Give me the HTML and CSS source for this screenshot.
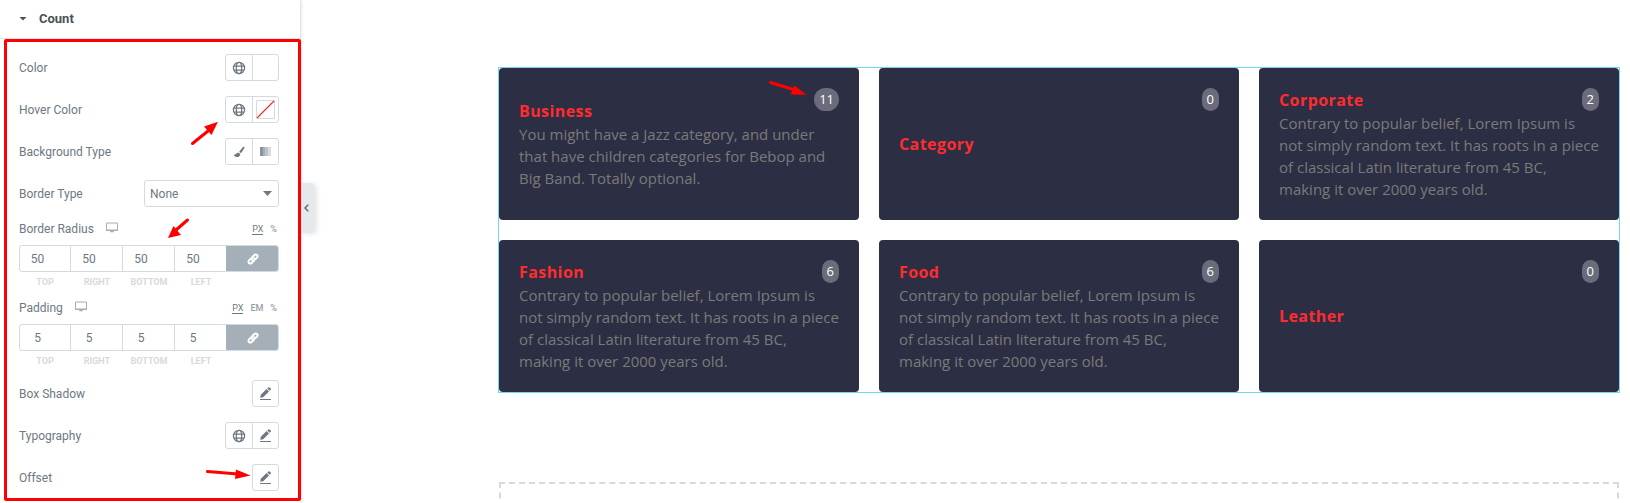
FILE: index.html
```html
<!DOCTYPE html>
<html lang="en">
<head>
<meta charset="utf-8">
<title>Count settings</title>
<link rel="stylesheet" href="styles.css">
</head>
<body>
<svg class="defs" width="0" height="0" aria-hidden="true">
  <symbol id="globe" viewBox="0 0 14 14"><g fill="none" stroke="currentColor" stroke-width="1.25"><circle cx="7" cy="7" r="5.600"/><ellipse cx="7" cy="7" rx="2.700" ry="5.600"/><path d="M2 5H12M2 9H12"/></g></symbol>
  <symbol id="pencil" viewBox="0 0 14 14"><path fill="currentColor" d="M1 12H12V13H1ZM1.200 10.800L1.800 7.800L7.600 2.100L10 4.500L4.200 10.200ZM8.300 1.400L9.300.4Q9.900 0 10.500.4L11.700 1.600Q12.300 2.200 11.700 2.800L10.700 3.800Z"/></symbol>
  <symbol id="brush" viewBox="0 0 12 12"><path fill="currentColor" d="M11.200.8C11.600 1.200 11.500 1.800 11.300 2.200L8 7.200L6.200 5.700L10 1.100C10.400.7 10.900.5 11.200.8ZM5.500 6.400L7.300 7.900C7.300 10 5.800 11 4 11C2 11 .9 10.300.8 8.600C2.800 9.500 2.800 6.600 5.500 6.400Z"/></symbol>
  <symbol id="desktop" viewBox="0 0 12 11"><path fill="none" stroke="currentColor" d="M.5 1H11.500V8.500H.5Z"/><path fill="currentColor" d="M0 7.500H12V9H0ZM4 9H8L7.500 10.300H4.500Z"/></symbol>
  <symbol id="link" viewBox="0 0 12 12"><g fill="none" stroke="currentColor" stroke-width="2" stroke-linecap="round"><path d="M5.100 6.900C4.300 6.100 4.400 5 5.100 4.300L7.400 2C8.200 1.200 9.300 1.300 10 2C10.700 2.700 10.800 3.800 10 4.600L8.800 5.800"/><path d="M6.900 5.100C7.700 5.900 7.600 7 6.900 7.700L4.600 10C3.800 10.800 2.700 10.700 2 10C1.300 9.300 1.200 8.200 2 7.400L3.200 6.200"/></g></symbol>
</svg>
<div class="editor">
  <aside class="panel">
    <header class="section-head"><i class="caret"></i><span>Count</span></header>
    <div class="controls">
      <div class="row"><span>Color</span><div class="group"><b><svg class="i14"><use href="#globe"/></svg></b><b></b></div></div>
      <div class="row"><span>Hover Color</span><div class="group"><b><svg class="i14"><use href="#globe"/></svg></b><b><svg class="swatch" viewBox="0 0 19 19"><path d="M.5.5H18.500V18.500H.5Z" fill="none" stroke="#d5dadf"/><path d="M1 18L18 1" stroke="#f22" stroke-width="1.1"/></svg></b></div></div>
      <div class="row"><span>Background Type</span><div class="group"><b><svg class="i12"><use href="#brush"/></svg></b><b><i class="gradient"></i></b></div></div>
      <div class="row"><span>Border Type</span><div class="select"><span>None</span><i class="caret"></i></div></div>
      <div class="dim-head"><span>Border Radius</span><svg class="device"><use href="#desktop"/></svg><div class="units"><u>PX</u><em>%</em></div></div>
      <div class="dims"><b>50</b><b>50</b><b>50</b><b>50</b><b class="linked"><svg class="i12"><use href="#link"/></svg></b></div>
      <div class="dim-labels"><span>TOP</span><span>RIGHT</span><span>BOTTOM</span><span>LEFT</span></div>
      <div class="dim-head second"><span>Padding</span><svg class="device"><use href="#desktop"/></svg><div class="units"><u>PX</u><em>EM</em><em>%</em></div></div>
      <div class="dims"><b>5</b><b>5</b><b>5</b><b>5</b><b class="linked"><svg class="i12"><use href="#link"/></svg></b></div>
      <div class="dim-labels last"><span>TOP</span><span>RIGHT</span><span>BOTTOM</span><span>LEFT</span></div>
      <div class="row"><span>Box Shadow</span><div class="group"><b><svg class="i14"><use href="#pencil"/></svg></b></div></div>
      <div class="row"><span>Typography</span><div class="group"><b><svg class="i14"><use href="#globe"/></svg></b><b><svg class="i14"><use href="#pencil"/></svg></b></div></div>
      <div class="row"><span>Offset</span><div class="group"><b><svg class="i14"><use href="#pencil"/></svg></b></div></div>
    </div>
  </aside>
  <div class="collapse"><svg width="5" height="8" viewBox="0 0 5 8"><path d="M4.200.8L1 4L4.200 7.200" fill="none" stroke="#556068" stroke-width="1.3"/></svg></div>
  <main class="preview">
    <section class="widget">
      <article class="card"><h3>Business</h3><p>You might have a Jazz category, and under that have children categories for Bebop and Big Band. Totally optional.</p><span class="count">11</span></article>
      <article class="card"><h3>Category</h3><span class="count">0</span></article>
      <article class="card"><h3>Corporate</h3><p>Contrary to popular belief, Lorem Ipsum is not simply random text. It has roots in a piece of classical Latin literature from 45 BC, making it over 2000 years old.</p><span class="count">2</span></article>
      <article class="card"><h3>Fashion</h3><p>Contrary to popular belief, Lorem Ipsum is not simply random text. It has roots in a piece of classical Latin literature from 45 BC, making it over 2000 years old.</p><span class="count">6</span></article>
      <article class="card"><h3>Food</h3><p>Contrary to popular belief, Lorem Ipsum is not simply random text. It has roots in a piece of classical Latin literature from 45 BC, making it over 2000 years old.</p><span class="count">6</span></article>
      <article class="card"><h3>Leather</h3><span class="count">0</span></article>
    </section>
    <div class="dropzone"></div>
  </main>
  <svg class="marks" viewBox="0 0 1630 503">
    <g stroke="#f00" stroke-width="3" stroke-linecap="round"><path d="M192.500 143.500L208 131"/><path d="M187.500 220L176 230"/><path d="M207.500 471.500L238 474"/><path d="M770.500 82.500L795 90"/></g>
    <g fill="#f00"><path d="M218 121.800L211.500 135L204 126.500Z"/><path d="M168 238L173.500 226L181 235Z"/><path d="M250.500 475.500L235 479L236 469.500Z"/><path d="M806.500 94.800L790.500 94.500L794.500 85.500Z"/></g>
  </svg>
</div>
</body>
</html>
```
FILE: styles.css
```css
* { box-sizing: border-box; }
body { margin: 0; background: #fff; overflow: hidden; }
h3, p { margin: 0; }
b, i, em { font-weight: inherit; font-style: normal; }
.defs { position: absolute; }
.editor { position: relative; display: flex; width: 1630px; height: 503px; overflow: hidden; }

.panel { width: 300px; height: 503px; flex: none; font: 12px/15px Roboto, sans-serif; color: #6d7882; box-shadow: 0 0 4px rgba(0,0,0,.25); }
.section-head { height: 39px; border-bottom: 1px solid #e0e4e8; display: flex; align-items: center; gap: 12px; padding: 0 0 1px 19px; font-weight: 700; font-size: 13px; color: #495157; }
.section-head span { margin-top: -1px; }
.caret { width: 8px; height: 4px; background: currentColor; clip-path: polygon(0 0, 100% 0, 50% 100%); }
.controls { margin-left: 4px; width: 297px; height: 462px; border: 3px solid #f00; border-radius: 2px; padding: 12px 19px 0 12px; }
.row { height: 27px; margin-bottom: 15px; display: flex; align-items: center; justify-content: space-between; }
.row > span, .select > span, .dim-head > span { padding-top: 2px; }
.group { display: flex; height: 27px; border: 1px solid #d5dadf; border-radius: 3px; }
.group b { width: 26px; display: flex; align-items: center; justify-content: center; }
.group b:only-child { width: 25px; }
.group b + b { border-left: 1px solid #d5dadf; }
.i14 { width: 14px; height: 14px; }
.i12 { width: 12px; height: 12px; }
.swatch { width: 19px; height: 19px; }
.gradient { width: 11px; height: 9px; background: linear-gradient(90deg, #8a939b 0 3px, #a4afb7 3px 5px, #bcc3c9 5px 8px, #d5dadf 8px); }
.select { width: 135px; height: 27px; border: 1px solid #d5dadf; border-radius: 3px; display: flex; align-items: center; justify-content: space-between; padding: 0 6px 0 5px; }
.select .caret { width: 9px; height: 5px; }
.dim-head { height: 15px; margin-top: -1px; margin-bottom: 9px; display: flex; align-items: center; }
.dim-head.second { margin-top: 8px; margin-bottom: 9px; }
.device { width: 12px; height: 11px; margin: 0 0 2px 12px; color: #a4afb7; }
.units { margin-left: auto; display: flex; gap: 7px; padding: 2px 2px 0 0; font-size: 9px; line-height: 10px; color: #96a1aa; }
.units em { font-weight: 500; }
.units u { text-decoration: none; border-bottom: 1px solid #6d7882; color: #6d7882; }
.dims { display: flex; height: 27px; border: 1px solid #d5dadf; border-radius: 3px; overflow: hidden; }
.dims b { width: 52px; padding: 1px 15px 0 0; border-right: 1px solid #d5dadf; display: flex; align-items: center; justify-content: center; }
.dims b:first-child { width: 51px; }
.dims .linked { width: 53px; margin: -1px; padding: 0; border: 0; background: #a4afb7; color: #fff; }
.dim-labels { display: flex; height: 20px; padding-top: 1px; font-size: 9px; line-height: 19px; font-weight: 700; color: #d5dadf; }
.dim-labels span { width: 52px; text-align: center; }
.dim-labels.last { margin-bottom: 9px; }

.collapse { width: 13px; height: 50px; margin: 183px 1px 0 1px; flex: none; background: #e6e9ec; border-radius: 0 3px 3px 0; box-shadow: 3px 1px 5px rgba(0,0,0,.1); display: flex; align-items: center; padding-left: 3px; }

.preview { flex: 1; padding: 67px 9px 0 183px; }
.widget { width: 1122px; border: 1px solid #71d7f7; display: grid; grid-template-columns: repeat(3, 360px); grid-auto-rows: 152px; gap: 20px; }
.card { position: relative; background: #2c2e43; border-radius: 4px; padding: 0 20px; display: flex; flex-direction: column; justify-content: center; font: 15px/22px "Open Sans", sans-serif; color: #7a7a7a; }
.card h3 { font-size: 16px; line-height: 24px; font-weight: 700; letter-spacing: .42px; color: #ff2c2f; }
.count { position: absolute; top: 20px; right: 20px; padding: 5px; border-radius: 50px; background: #6b6c7b; color: #fff; font-size: 13px; line-height: 13px; }
.dropzone { width: 1120px; height: 100px; margin: 89px 0 0 1px; border: 2px dashed #d5dadf; }
.marks { position: absolute; left: 0; top: 0; width: 1630px; height: 503px; pointer-events: none; }
```
